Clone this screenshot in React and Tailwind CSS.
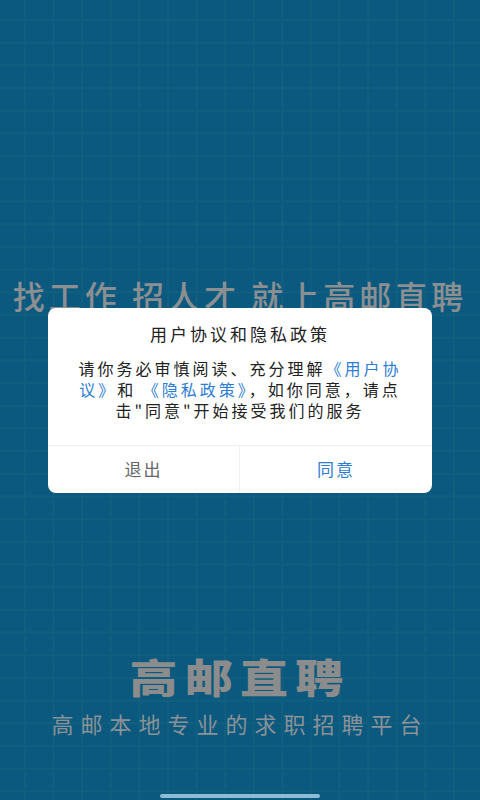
export default function App() {
  return (
    <div className="relative w-[480px] h-[800px] overflow-hidden bg-[#0b597e] bg-[linear-gradient(to_right,#115f7f_2px,transparent_2px),linear-gradient(to_bottom,#115f7f_2px,transparent_2px)] bg-[size:28.6px_22.7px] bg-[position:24px_19px] font-['Noto_Sans_CJK_SC','Noto_Sans',sans-serif] flex flex-col items-center">
      {/* 背景页 */}
      <h1 className="mt-[279px] text-[32px] leading-none font-medium tracking-[4px] text-[#8b8f92] whitespace-nowrap">
        找工作 招人才 就上高邮直聘
      </h1>

      <div className="mt-[345px] text-[40px] leading-none font-black tracking-[6px] text-[#8c8c8c] scale-x-[1.2] whitespace-nowrap">
        高邮直聘
      </div>
      <p className="mt-[16px] text-[22px] leading-none tracking-[7px] text-[#8a9297] whitespace-nowrap">
        高邮本地专业的求职招聘平台
      </p>

      <div className="mt-auto mb-[2px] w-[160px] h-[4px] rounded-full bg-[#8dbcd6]" />

      {/* 协议弹窗 */}
      <div className="absolute inset-0 flex items-center justify-center">
        <div className="w-[384px] bg-white rounded-lg overflow-hidden">
          <div className="pt-[14px] text-center text-[17px] leading-[24px] tracking-[3px] text-[#222]">
            用户协议和隐私政策
          </div>
          <div className="mt-[12px] pb-[24px] text-center text-[16px] leading-[21px] tracking-[3px] text-[#222]">
            <div className="whitespace-nowrap">
              请你务必审慎阅读、充分理解<span className="text-[#2d7dd2]">《用户协</span>
            </div>
            <div className="whitespace-nowrap">
              <span className="text-[#2d7dd2]">议》</span>和 <span className="text-[#2d7dd2]">《隐私政策》</span>，如你同意，请点
            </div>
            <div className="whitespace-nowrap">击"同意"开始接受我们的服务</div>
          </div>
          <div className="grid grid-cols-2 border-t border-[#f0f0f0] h-[48px]">
            <button className="border-r border-[#f0f0f0] text-[17px] tracking-[2px] text-[#666]">退出</button>
            <button className="text-[17px] tracking-[2px] text-[#2d7dd2]">同意</button>
          </div>
        </div>
      </div>
    </div>
  );
}
